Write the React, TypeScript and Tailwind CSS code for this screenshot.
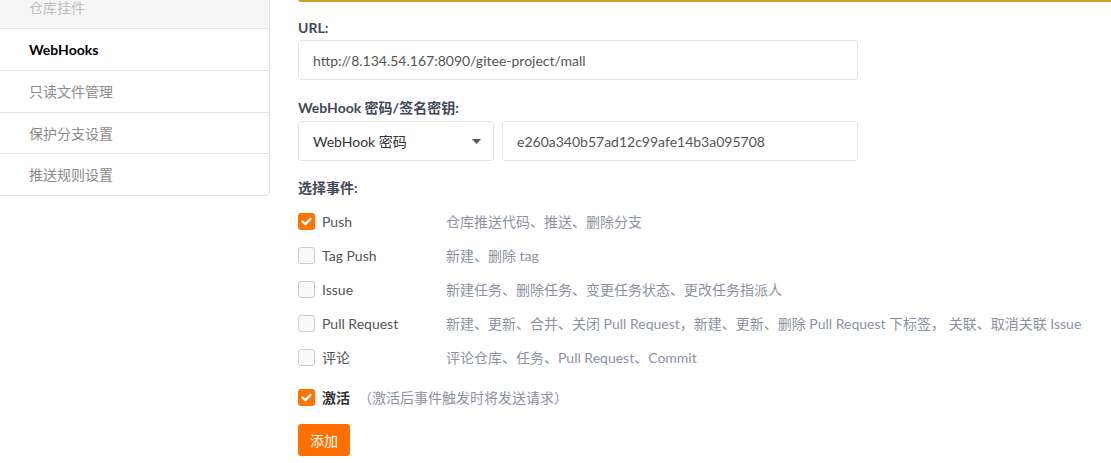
const font = "font-['Lato','Noto_Sans_CJK_SC',sans-serif]";

const menu = ["WebHooks", "只读文件管理", "保护分支设置", "推送规则设置"];

const events = [
  { name: "Push", desc: "仓库推送代码、推送、删除分支", checked: true },
  { name: "Tag Push", desc: "新建、删除 tag", checked: false },
  { name: "Issue", desc: "新建任务、删除任务、变更任务状态、更改任务指派人", checked: false },
  {
    name: "Pull Request",
    desc: "新建、更新、合并、关闭 Pull Request，新建、更新、删除 Pull Request 下标签， 关联、取消关联 Issue",
    checked: false,
  },
  { name: "评论", desc: "评论仓库、任务、Pull Request、Commit", checked: false },
];

function Check(props: { checked: boolean }) {
  if (props.checked) {
    return (
      <span className="w-[17px] h-[17px] rounded-[3px] bg-[#fe7300] flex items-center justify-center shrink-0">
        <svg width="11" height="9" viewBox="0 0 11 9">
          <path d="M1.5 4.5 L4.3 7.2 L9.5 1.8" stroke="white" strokeWidth="2.4" fill="none" strokeLinecap="round" strokeLinejoin="round" />
        </svg>
      </span>
    );
  }
  return <span className="w-[17px] h-[17px] rounded-[3px] border border-[#c9ccd3] bg-[#f7f8fa] shrink-0" />;
}

export default function App() {
  return (
    <div className={`${font} w-[1111px] h-[463px] bg-white flex overflow-hidden text-[14px] leading-[21px]`}>
      <div className="w-[270px] shrink-0">
        <div className="border-r border-b border-[#e3e3e3] rounded-br-[4px] bg-white -mt-[14px]">
          <div className="h-[43px] bg-[#f6f6f6] border-b border-[#e3e3e3] flex items-center pl-[29px] pt-[1px] text-[#bdbdbd]">
            仓库挂件
          </div>
          {menu.map((m, i) => (
            <div
              key={m}
              className={`flex items-center pl-[29px] ${
                i === 3 ? "h-[41px]" : i === 2 ? "h-[41px] border-b border-[#e3e3e3]" : "h-[42px] border-b border-[#e3e3e3]"
              } ${i === 0 ? "text-black font-bold" : "text-[#8a8a8a]"}`}
            >
              {m}
            </div>
          ))}
        </div>
      </div>

      <div className="ml-[28px] flex-1 flex flex-col">
        <div className="h-[3px] -mt-[1px] border-b-2 border-l-2 border-[#c9a227] rounded-bl-[4px] bg-white" />

        <div className="mt-[15px] font-bold text-[#40485b]">URL:</div>
        <div className="mt-[2px] w-[560px] h-[40px] border border-[#e3e3e3] rounded-[3px] flex items-center px-[14px] text-[#555]">
          http://8.134.54.167:8090/gitee-project/mall
        </div>

        <div className="mt-[17px] font-bold text-[#40485b]">WebHook 密码/签名密钥:</div>
        <div className="mt-[3px] flex gap-[8px]">
          <div className="w-[196px] h-[40px] border border-[#e3e3e3] rounded-[3px] flex items-center justify-between pl-[14px] pr-[12px] text-[#333]">
            <span>WebHook 密码</span>
            <svg width="9" height="5" viewBox="0 0 9 5">
              <path d="M0 0 L9 0 L4.5 5 Z" fill="#555" />
            </svg>
          </div>
          <div className="w-[356px] h-[40px] border border-[#e3e3e3] rounded-[3px] flex items-center px-[14px] text-[#555]">
            e260a340b57ad12c99afe14b3a095708
          </div>
        </div>

        <div className="mt-[16px] font-bold text-[#40485b]">选择事件:</div>
        <div className="mt-[6px] flex flex-col">
          {events.map((e) => (
            <div key={e.name} className="h-[34px] flex items-center">
              <Check checked={e.checked} />
              <span className="ml-[7px] w-[124px] text-[#555]">{e.name}</span>
              <span className="text-[#8c92a4] whitespace-nowrap">{e.desc}</span>
            </div>
          ))}
        </div>

        <div className="mt-[13px] h-[20px] flex items-center">
          <Check checked={true} />
          <span className="ml-[7px] text-[#333] font-bold">激活</span>
          <span className="ml-[8px] text-[#8c92a4]">（激活后事件触发时将发送请求）</span>
        </div>

        <div className="mt-[17px]">
          <button className="h-[32px] px-[12px] rounded-[3px] bg-[#fe6f00] text-white">添加</button>
        </div>
      </div>
    </div>
  );
}
